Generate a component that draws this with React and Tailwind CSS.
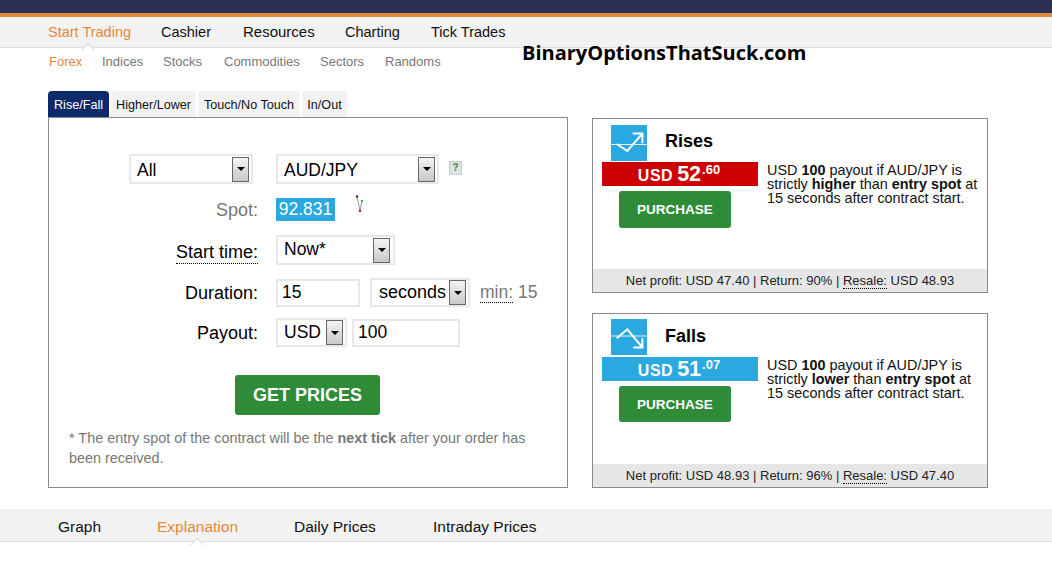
const Notch = ({ className }) => (
  <span className={`absolute bottom-[-7px] w-[14px] h-[7px] overflow-hidden ${className}`}>
    <span className="absolute left-[2px] top-[2px] w-[10px] h-[10px] rotate-45 bg-white border-l border-t border-[#dcdcdc]" />
  </span>
);

const DropArrow = () => (
  <span className="flex items-center justify-center w-[17px] h-[25px] border border-[#666] bg-gradient-to-b from-[#f4f4f4] to-[#c8c8c8] shrink-0">
    <span className="w-0 h-0 border-x-[4px] border-x-transparent border-t-[4px] border-t-black" />
  </span>
);

const Select = ({ value, className, textClass = "" }) => (
  <div className={`flex items-center justify-between border-2 border-[#e8e8e8] bg-white text-black ${className}`}>
    <span className={textClass}>{value}</span>
    <DropArrow />
  </div>
);

const Row = ({ label, labelClass = "text-black mt-[2px]", className = "", children }) => (
  <div className={`flex items-center ${className}`}>
    <div className="w-[209px] flex justify-end shrink-0 text-[18px]">
      <span className={labelClass}>{label}</span>
    </div>
    <div className="ml-[18px] flex items-center">{children}</div>
  </div>
);

const RiseIcon = () => (
  <svg width="36" height="36" viewBox="0 0 36 36" className="shrink-0 mt-[6px]">
    <rect width="36" height="36" fill="#2aa9e0" />
    <path d="M0 19.5H36" stroke="#fff" strokeWidth="1" opacity="0.85" />
    <path d="M5.7 19L16.3 26L31 9M21.7 8.6H31.4V18.3" fill="none" stroke="#fff" strokeWidth="2" />
  </svg>
);

const FallIcon = () => (
  <svg width="36" height="36" viewBox="0 0 36 36" className="shrink-0 mt-[5px]">
    <rect width="36" height="36" fill="#2aa9e0" />
    <path d="M0 17H36" stroke="#fff" strokeWidth="1" opacity="0.85" />
    <path d="M5.7 19.3L16.3 10.3L31 28M31.4 19.3V28.4H22.3" fill="none" stroke="#fff" strokeWidth="2" />
  </svg>
);

const Quote = ({ title, icon, barClass, btnClass, whole, cents, word, profit, ret, resale }) => (
  <div className="relative w-[396px] h-[175px] border border-[#8a8a8a] bg-white flex flex-col">
    <div className="flex items-start pl-[18px] h-[43px]">
      {icon}
      <span className="ml-[18px] mt-[10px] text-[18px] leading-[24px] font-bold text-black">{title}</span>
    </div>
    <div className="flex flex-1 pl-[9px]">
      <div className="w-[156px] flex flex-col items-start">
        <div className={`w-full h-[24px] flex items-center justify-center pr-[2px] text-white font-bold ${barClass}`}>
          <span className="text-[16px] mt-[3px] tracking-[0.5px]">USD</span>
          <span className="text-[21.5px] ml-[4px]">{whole}</span>
          <span className="text-[13px] self-start leading-[16px] ml-[1px]">.{cents}</span>
        </div>
        <button className={`mt-[5px] ml-[17px] w-[112px] pt-[2px] rounded-[3px] bg-[#2e8b38] text-white font-bold text-[13.5px] ${btnClass}`}>
          PURCHASE
        </button>
      </div>
      <p className="ml-[9px] w-[218px] text-[14.4px] leading-[14px] pt-[1px] text-[#111]">
        USD <b>100</b> payout if AUD/JPY is strictly <b>{word}</b> than <b>entry spot</b> at 15 seconds after contract start.
      </p>
    </div>
    <div className="h-[23px] pt-[1px] bg-[#e6e6e6] flex items-center justify-center text-[13px] text-[#222]">
      <span>
        Net profit: USD {profit} | Return: {ret} |{" "}
        <span className="border-b border-dotted border-black">Resale:</span> USD {resale}
      </span>
    </div>
  </div>
);

export default function App() {
  return (
    <div className="relative w-[1052px] h-[563px] overflow-hidden bg-white font-['Liberation_Sans',Arial,sans-serif]">
      <div className="h-[13px] bg-[#2a3052]" />
      <div className="h-[4px] bg-[#e08a3c]" />

      <nav className="relative h-[31px] pt-[1px] bg-[#f2f2f2] border-b border-[#dcdcdc] pl-[48px] flex items-center text-[14.5px] text-[#111]">
        <span className="w-[113px]">
          <span className="relative text-[#e6883a]">
            Start Trading
            <Notch className="left-[33px] bottom-[-10px]" />
          </span>
        </span>
        <span className="w-[82px]">Cashier</span>
        <span className="w-[102px] text-[15px]">Resources</span>
        <span className="w-[86px]">Charting</span>
        <span>Tick Trades</span>
      </nav>

      <div className="h-[28px] pl-[49px] flex items-center text-[13px] text-[#777]">
        <span className="w-[53px] text-[#e6883a]">Forex</span>
        <span className="w-[61px]">Indices</span>
        <span className="w-[61px]">Stocks</span>
        <span className="w-[96px]">Commodities</span>
        <span className="w-[65px]">Sectors</span>
        <span>Randoms</span>
      </div>

      <div className="absolute left-[522px] top-[39px] font-['Open_Sans',sans-serif] font-bold text-[20px] leading-[28px] text-black whitespace-nowrap">
        BinaryOptionsThatSuck.com
      </div>

      <main className="pl-[48px] pt-[15px] flex gap-[24px]">
        <section className="w-[520px]">
          <div className="flex gap-[2px] h-[26px] text-[12.6px] text-[#111]">
            <span className="w-[61px] pt-[2px] flex items-center justify-center rounded-t-[4px] bg-[#0f2a6b] text-white">Rise/Fall</span>
            <span className="w-[85px] pt-[2px] flex items-center justify-center rounded-t-[4px] bg-[#f2f2f2]">Higher/Lower</span>
            <span className="w-[102px] pt-[2px] flex items-center justify-center rounded-t-[4px] bg-[#f2f2f2]">Touch/No Touch</span>
            <span className="w-[45px] pt-[2px] flex items-center justify-center rounded-t-[4px] bg-[#f2f2f2]">In/Out</span>
          </div>

          <div className="h-[371px] border border-[#8a8a8a] pt-[36px] text-[17.5px]">
            <div className="flex items-center h-[30px] pl-[80px]">
              <Select value="All" textClass="mt-[2px]" className="w-[124px] h-[30px] pl-[6px] pr-[2px]" />
              <Select value="AUD/JPY" textClass="mt-[2px]" className="ml-[23px] w-[163px] h-[30px] pl-[6px] pr-[2px]" />
              <span className="ml-[10px] mb-[3px] w-[13px] h-[14px] flex items-center justify-center bg-[#dfe3df] border border-[#ccc] text-[10px] font-bold text-[#3c8a3c]">?</span>
            </div>

            <Row label="Spot:" labelClass="text-[#777] mt-[1px]" className="mt-[14px] h-[23px]">
              <span className="w-[59px] h-[23px] bg-[#2aa9e0] text-white flex items-center justify-center">92.831</span>
              <svg width="10" height="18" viewBox="0 0 10 18" className="ml-[20px] mb-[11px]">
                <path d="M2 1L5 16L7 6" fill="none" stroke="#777" strokeWidth="0.8" />
                <circle cx="2" cy="1.5" r="1.3" fill="#2222aa" />
                <circle cx="7" cy="6" r="1.3" fill="#33bb44" />
                <circle cx="5" cy="16" r="1.3" fill="#cc2222" />
              </svg>
            </Row>

            <Row label="Start time:" labelClass="border-b border-dotted border-black leading-[21px] mt-[5px]" className="mt-[14px] h-[30px]">
              <Select value="Now*" textClass="mb-[1px]" className="w-[119px] h-[30px] pl-[6px] pr-[3px]" />
            </Row>

            <Row label="Duration:" className="mt-[13px] h-[29px]">
              <div className="w-[84px] h-[28px] border-2 border-[#e8e8e8] pl-[4px] flex items-center text-black">15</div>
              <Select value="seconds" textClass="text-[18px]" className="ml-[10px] w-[100px] h-[29px] pl-[7px] pr-[2px]" />
              <span className="ml-[10px] text-[#777]">
                <span className="border-b border-dotted border-black leading-[18px]">min:</span> 15
              </span>
            </Row>

            <Row label="Payout:" className="mt-[11px] h-[29px]">
              <Select value="USD" className="w-[71px] h-[29px] pl-[6px] pr-[2px]" />
              <div className="ml-[5px] w-[108px] h-[28px] border-2 border-[#e8e8e8] pl-[4px] flex items-center text-black">100</div>
            </Row>

            <div className="mt-[28px] pl-[186px]">
              <button className="w-[145px] h-[40px] rounded-[3px] bg-[#2e8b38] text-white font-bold text-[18px]">
                GET PRICES
              </button>
            </div>

            <p className="mt-[13px] mx-[20px] text-[14.4px] leading-[20px] text-[#777]">
              * The entry spot of the contract will be the <b>next tick</b> after your order has been received.
            </p>
          </div>
        </section>

        <section className="pt-[27px] flex flex-col gap-[20px]">
          <Quote
            title="Rises"
            icon={<RiseIcon />}
            barClass="bg-[#cc0000]"
            btnClass="h-[37px]"
            whole="52"
            cents="60"
            word="higher"
            profit="47.40"
            ret="90%"
            resale="48.93"
          />
          <Quote
            title="Falls"
            icon={<FallIcon />}
            barClass="bg-[#2aa9e0]"
            btnClass="h-[36px]"
            whole="51"
            cents="07"
            word="lower"
            profit="48.93"
            ret="96%"
            resale="47.40"
          />
        </section>
      </main>

      <div className="relative mt-[21px] h-[33px] pt-[3px] bg-[#f2f2f2] border-b border-[#dcdcdc] pl-[58px] flex items-center text-[15.5px] text-[#111]">
        <span className="w-[99px]">Graph</span>
        <span className="w-[137px]">
          <span className="relative text-[#e6883a]">
            Explanation
            <Notch className="left-[33px] bottom-[-10px]" />
          </span>
        </span>
        <span className="w-[139px]">Daily Prices</span>
        <span>Intraday Prices</span>
      </div>
    </div>
  );
}
